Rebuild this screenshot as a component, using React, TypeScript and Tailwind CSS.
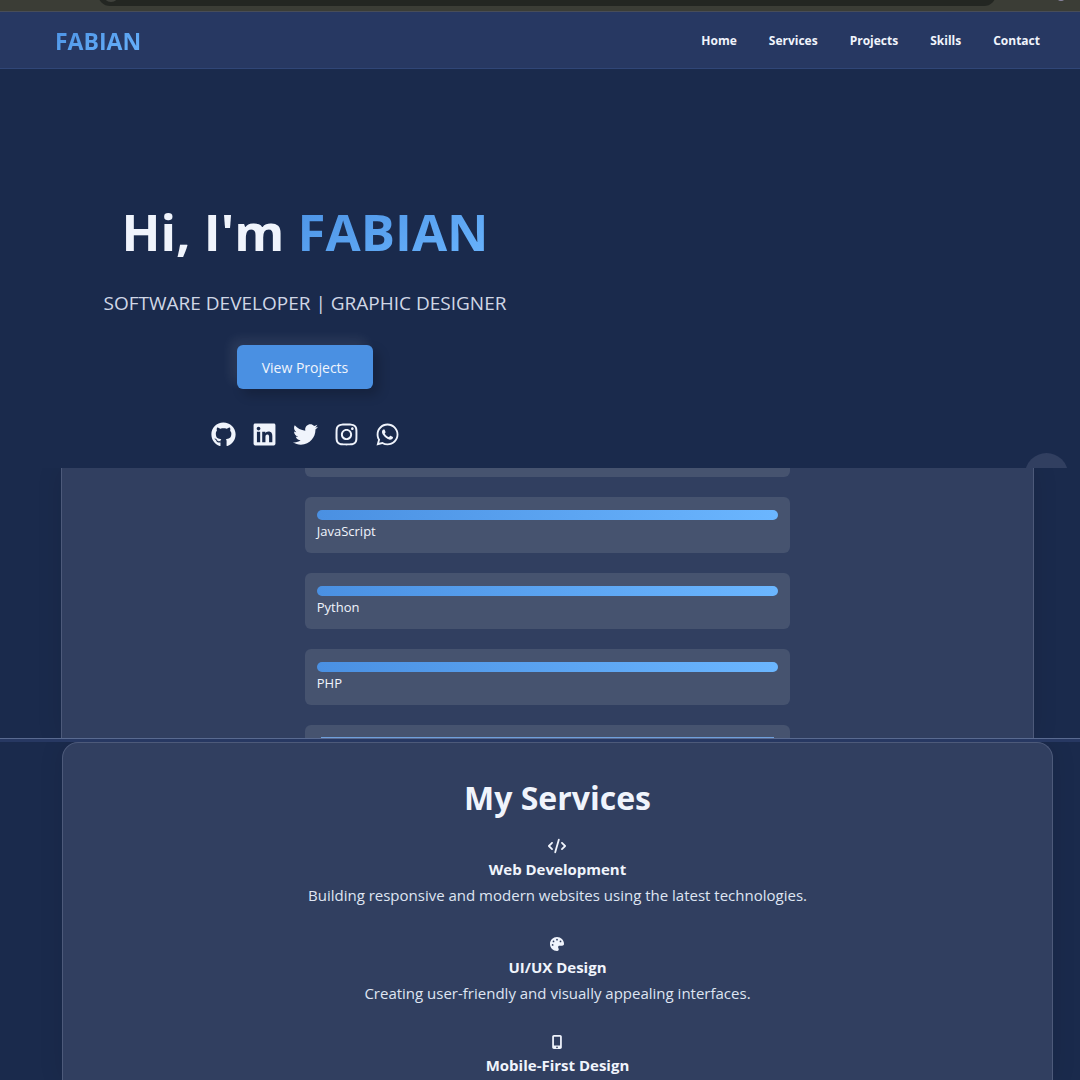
import {
  FaCode,
  FaGithub,
  FaInstagram,
  FaLinkedin,
  FaMobileScreenButton,
  FaPalette,
  FaTwitter,
  FaWhatsapp,
} from "react-icons/fa6";

const links = ["Home", "Services", "Projects", "Skills", "Contact"];

const socials = [
  { name: "GitHub", icon: FaGithub },
  { name: "LinkedIn", icon: FaLinkedin },
  { name: "Twitter", icon: FaTwitter },
  { name: "Instagram", icon: FaInstagram },
  { name: "WhatsApp", icon: FaWhatsapp },
];

const skills = ["JavaScript", "Python", "PHP"];

const services = [
  {
    title: "Web Development",
    text: "Building responsive and modern websites using the latest technologies.",
    icon: <FaCode className="size-[18px]" />,
  },
  {
    title: "UI/UX Design",
    text: "Creating user-friendly and visually appealing interfaces.",
    icon: <FaPalette className="size-[14px]" />,
  },
  {
    title: "Mobile-First Design",
    text: "",
    icon: <FaMobileScreenButton className="size-[14px]" />,
  },
];

const BrowserBar = () => (
  <div className="flex items-start h-3 shrink-0 overflow-hidden bg-[#3b3d36] border-b border-[#484d58] pl-[98px] pr-[15px]">
    <div className="flex flex-1 items-center h-6 -mt-[18px] pl-[5px] rounded-full bg-[#232622]">
      <div className="size-4 rounded-full bg-[#3f413c]" />
    </div>
    <div className="size-2 -mt-[7px] ml-[61px] rounded-full bg-[#8a86a0]" />
  </div>
);

const Header = () => (
  <header className="flex shrink-0 items-center justify-between h-[57px] pt-0.5 pl-[55px] pr-10 bg-[#273862] border-b border-[#304677]">
    <a
      href="#home"
      className="text-[23px] font-bold bg-linear-to-br from-[#4a90e2] to-[#6bb6ff] bg-clip-text text-transparent"
    >
      FABIAN
    </a>
    <nav className="flex gap-8">
      {links.map((link) => (
        <a
          key={link}
          href={`#${link.toLowerCase()}`}
          className="text-xs leading-5 font-bold"
        >
          {link}
        </a>
      ))}
    </nav>
  </header>
);

const Hero = () => (
  <section
    id="home"
    className="relative shrink-0 overflow-hidden pl-[61px] pt-[127px] pb-[21px]"
  >
    <div className="flex flex-col items-center w-[488px] max-w-full">
      <h1 className="text-[51px] leading-[70px] font-bold">
        Hi, I'm{" "}
        <span className="bg-linear-to-br from-[#4a90e2] to-[#6bb6ff] bg-clip-text text-transparent">
          FABIAN
        </span>
      </h1>
      <p className="mt-6 text-[19px] leading-[26px] text-[#d0d7e6]">
        SOFTWARE DEVELOPER | GRAPHIC DESIGNER
      </p>
      <button className="mt-[29px] h-11 px-[25px] pt-0.5 rounded-md bg-[#4a90e2] text-sm shadow-[6px_6px_12px_rgba(0,0,0,0.2),-6px_-6px_12px_rgba(255,255,255,0.08)]">
        View Projects
      </button>
      <div className="mt-[33px] flex gap-4 text-[25px]">
        {socials.map(({ name, icon: Icon }) => (
          <a key={name} href="#contact" aria-label={name}>
            <Icon />
          </a>
        ))}
      </div>
    </div>
    {/* floating bubble, half hidden by the next section */}
    <div className="absolute right-3 -bottom-7 size-[43px] rounded-full bg-[#313f60]" />
  </section>
);

const Skills = () => (
  <section id="skills" className="shrink-0 overflow-hidden pl-[61px] pr-[46px]">
    <div className="flex flex-col items-center gap-5 bg-[#313f60] border-x border-[#4d5a7a] shadow-[0_0_24px_rgba(0,0,0,0.1)]">
      <div className="w-1/2 h-[9px] rounded-b-md bg-[#46536f]" />
      {skills.map((skill) => (
        <div key={skill} className="w-1/2 h-14 px-3 py-[13px] rounded-md bg-[#46536f]">
          <div className="h-[10px] rounded-full bg-linear-to-r from-[#4a90e2] to-[#6bb6ff]" />
          <p className="text-[13px] leading-[22px]">{skill}</p>
        </div>
      ))}
      <div className="w-1/2 h-[13px] rounded-t-md bg-[#46536f] px-4 pt-3">
        <div className="h-px bg-[#6f9fdb]" />
      </div>
    </div>
  </section>
);

const Services = () => (
  <section
    id="services"
    className="overflow-hidden flex-1 pl-[62px] pr-[27px]"
  >
    <div className="h-full pt-8 flex flex-col items-center text-center rounded-t-2xl bg-[#313f60] border border-b-0 border-[#4d5a7a] shadow-[0_0_24px_rgba(0,0,0,0.1)]">
      <h2 className="text-[32px] leading-[46px] font-bold">My Services</h2>
      <ul className="mt-[15px] flex flex-col gap-[26px]">
        {services.map(({ title, text, icon }) => (
          <li key={title} className="flex flex-col items-center">
            <span className="flex h-5 items-center">{icon}</span>
            <h3 className="text-[15px] leading-[26px] font-bold">{title}</h3>
            <p className="text-[15px] leading-[26px] text-[#dfe5f2]">{text}</p>
          </li>
        ))}
      </ul>
    </div>
  </section>
);

export default function App() {
  return (
    <div className="flex flex-col h-screen overflow-hidden bg-[#1a2a4c] text-[#f0f4fc] font-['Open_Sans','Noto_Sans',sans-serif]">
      <BrowserBar />
      <Header />
      <Hero />
      <Skills />
      <div className="h-1 shrink-0 bg-[#273862] border-t border-[#596a90]" />
      <Services />
    </div>
  );
}
